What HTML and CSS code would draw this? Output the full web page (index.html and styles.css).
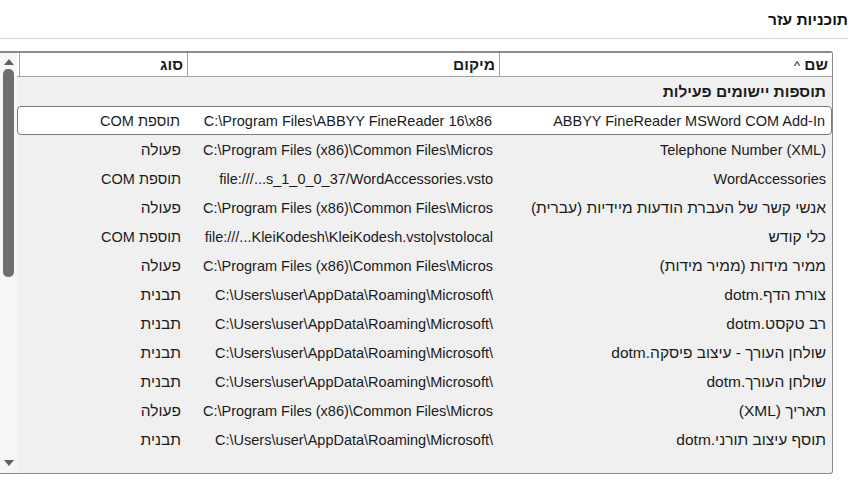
FILE: index.html
```html
<!DOCTYPE html>
<html lang="he" dir="rtl">
<head>
    <meta charset="UTF-8">
    <title>תוכניות עזר</title>
    <link rel="stylesheet" href="styles.css">
</head>
<body>
    <div class="page">
        <h1 class="title he">תוכניות עזר</h1>
        <hr class="divider">

        <div class="panel">
            <div class="list">
                <div class="row head">
                    <div class="cell he">שם <span class="sort">^</span></div>
                    <div class="cell he">מיקום</div>
                    <div class="cell he">סוג</div>
                </div>

                <div class="group he">תוספות יישומים פעילות</div>

                <div class="row selected">
                    <div class="cell">ABBYY FineReader MSWord COM Add-In</div>
                    <div class="cell">C:\Program Files\ABBYY FineReader 16\x86</div>
                    <div class="cell">תוספת COM</div>
                </div>
                <div class="row">
                    <div class="cell">Telephone Number (XML)</div>
                    <div class="cell">C:\Program Files (x86)\Common Files\Micros</div>
                    <div class="cell he">פעולה</div>
                </div>
                <div class="row">
                    <div class="cell">WordAccessories</div>
                    <div class="cell">file:///...s_1_0_0_37/WordAccessories.vsto</div>
                    <div class="cell">תוספת COM</div>
                </div>
                <div class="row">
                    <div class="cell he">אנשי קשר של העברת הודעות מיידיות (עברית)</div>
                    <div class="cell">C:\Program Files (x86)\Common Files\Micros</div>
                    <div class="cell he">פעולה</div>
                </div>
                <div class="row">
                    <div class="cell he">כלי קודש</div>
                    <div class="cell">file:///...KleiKodesh\KleiKodesh.vsto|vstolocal</div>
                    <div class="cell">תוספת COM</div>
                </div>
                <div class="row">
                    <div class="cell he">ממיר מידות (ממיר מידות)</div>
                    <div class="cell">C:\Program Files (x86)\Common Files\Micros</div>
                    <div class="cell he">פעולה</div>
                </div>
                <div class="row">
                    <div class="cell he">צורת הדף.dotm</div>
                    <div class="cell">C:\Users\user\AppData\Roaming\Microsoft\</div>
                    <div class="cell he">תבנית</div>
                </div>
                <div class="row">
                    <div class="cell he">רב טקסט.dotm</div>
                    <div class="cell">C:\Users\user\AppData\Roaming\Microsoft\</div>
                    <div class="cell he">תבנית</div>
                </div>
                <div class="row">
                    <div class="cell he">שולחן העורך - עיצוב פיסקה.dotm</div>
                    <div class="cell">C:\Users\user\AppData\Roaming\Microsoft\</div>
                    <div class="cell he">תבנית</div>
                </div>
                <div class="row">
                    <div class="cell he">שולחן העורך.dotm</div>
                    <div class="cell">C:\Users\user\AppData\Roaming\Microsoft\</div>
                    <div class="cell he">תבנית</div>
                </div>
                <div class="row">
                    <div class="cell he">תאריך (XML)</div>
                    <div class="cell">C:\Program Files (x86)\Common Files\Micros</div>
                    <div class="cell he">פעולה</div>
                </div>
                <div class="row">
                    <div class="cell he">תוסף עיצוב תורני.dotm</div>
                    <div class="cell">C:\Users\user\AppData\Roaming\Microsoft\</div>
                    <div class="cell he">תבנית</div>
                </div>
            </div>

            <!-- scrollbar on the left side -->
            <div class="scrollbar">
                <svg class="arrow" width="12" height="10" viewBox="0 0 12 10"><path d="M1 8 L6 2 L11 8 Z" fill="#606060"/></svg>
                <div class="track"><div class="thumb"></div></div>
                <svg class="arrow" width="12" height="10" viewBox="0 0 12 10"><path d="M1 2 L6 8 L11 2 Z" fill="#606060"/></svg>
            </div>
        </div>
    </div>
</body>
</html>
```

FILE: styles.css
```css
body {
    margin: 0;
    background: #ffffff;
    color: #1b1b1b;
    font-family: "Liberation Sans", sans-serif;
    font-size: 14.5px;
    overflow: hidden;
}

/* Hebrew labels are set a bit larger than the Latin paths */
.he {
    font-size: 15.5px;
}

.page {
    width: 863px;
    padding-top: 10px;
}

.title {
    margin: 0 15px 0 0;
    font-weight: bold;
    line-height: 20px;
    color: #111;
}

.divider {
    margin: 8px 15px 12px 0;
    border: none;
    border-top: 1px solid #d5d5d5;
}

.panel {
    display: flex;
    width: 833px;
    height: 423px;
    margin-right: 30px;
    box-sizing: border-box;
    background: #f0f0f0;
    border: 1px solid #8a8a8a;
    border-left: none;
    border-top-width: 2px;
    border-top-right-radius: 3px;
    border-bottom-right-radius: 3px;
}

.list {
    flex: 1;
}

.row {
    display: grid;
    grid-template-columns: 333px 312px 168px;
    height: 29px;
    align-items: center;
    box-sizing: border-box;
}

.cell {
    padding: 0 6px;
    text-align: right;
    white-space: nowrap;
    overflow: hidden;
    unicode-bidi: plaintext;
}

.row.head {
    height: 24px;
    background: #ffffff;
    border-bottom: 1px solid #a3a3a3;
    font-weight: bold;
}

.row.head .cell {
    height: 100%;
    line-height: 23px;
    padding: 0 4px;
    border-left: 1px solid #a3a3a3;
}

.sort {
    font-weight: normal;
    font-size: 13px;
}

.group {
    height: 29px;
    line-height: 29px;
    padding-right: 6px;
    font-weight: bold;
}

.row.selected {
    background: #ffffff;
    border: 1px solid #7a7a7a;
    border-radius: 4px;
}

.scrollbar {
    width: 17px;
    display: flex;
    flex-direction: column;
    align-items: center;
    background: #f6f6f6;
    padding: 4px 0 5px;
    box-sizing: border-box;
}

.arrow {
    flex: none;
}

.track {
    flex: 1;
    width: 100%;
    padding: 2px 0 0 0;
    display: flex;
    justify-content: center;
}

.thumb {
    width: 11px;
    height: 208px;
    background: #6e6e6e;
    border-radius: 5px;
}
```
